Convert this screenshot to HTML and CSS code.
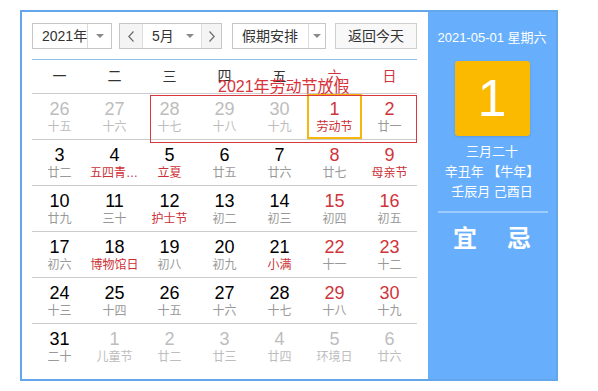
FILE: index.html
```html
<!DOCTYPE html>
<html lang="zh-CN">
<head>
    <meta charset="UTF-8">
    <meta name="viewport" content="width=device-width, initial-scale=1.0">
    <title>万年历</title>
    <link rel="stylesheet" href="styles.css">
</head>
<body>
    <div class="calendar">
        <div class="main">
            <div class="toolbar">
                <div class="select yearSel">
                    <span class="label">2021年</span>
                    <span class="arrow"><i class="tri"></i></span>
                </div>
                <div class="select monthSel">
                    <span class="btn prev"><svg width="6" height="11" viewBox="0 0 6 11"><polyline points="5.5,0.5 0.8,5.5 5.5,10.5" fill="none" stroke="#666" stroke-width="1.1"/></svg></span>
                    <span class="label">5月</span>
                    <span class="marrow"><i class="tri"></i></span>
                    <span class="btn next"><svg width="6" height="11" viewBox="0 0 6 11"><polyline points="0.5,0.5 5.2,5.5 0.5,10.5" fill="none" stroke="#666" stroke-width="1.1"/></svg></span>
                </div>
                <div class="select holidaySel">
                    <span class="label">假期安排</span>
                    <span class="arrow"><i class="tri"></i></span>
                </div>
                <div class="todayBtn">返回今天</div>
            </div>
            <div class="calBody">
                <div class="weekHead">
                    <span>一</span><span>二</span><span>三</span><span>四</span><span>五</span><span class="red">六</span><span class="red">日</span>
                </div>
                <div id="weeks"></div>
                <div class="holidayBox"></div>
                <div class="holidayTitle">2021年劳动节放假</div>
            </div>
        </div>
        <div class="panel">
            <div class="date">2021-05-01 星期六</div>
            <div class="bigDay">1</div>
            <div class="lunarInfo">
                <div>三月二十</div>
                <div>辛丑年 【牛年】</div>
                <div>壬辰月 己酉日</div>
            </div>
            <div class="divider"></div>
            <div class="yiji"><span>宜</span><span>忌</span></div>
        </div>
    </div>

    <script>
        // num, lunar, flags: o = other month, w = weekend, f = festival, s = selected
        var days = [
            [26,"十五","o"],[27,"十六","o"],[28,"十七","o"],[29,"十八","o"],[30,"十九","o"],[1,"劳动节","wfs"],[2,"廿一","w"],
            [3,"廿二",""],[4,"五四青年节","f"],[5,"立夏","f"],[6,"廿五",""],[7,"廿六",""],[8,"廿七","w"],[9,"母亲节","wf"],
            [10,"廿九",""],[11,"三十",""],[12,"护士节","f"],[13,"初二",""],[14,"初三",""],[15,"初四","w"],[16,"初五","w"],
            [17,"初六",""],[18,"博物馆日","f"],[19,"初八",""],[20,"初九",""],[21,"小满","f"],[22,"十一","w"],[23,"十二","w"],
            [24,"十三",""],[25,"十四",""],[26,"十五",""],[27,"十六",""],[28,"十七",""],[29,"十八","w"],[30,"十九","w"],
            [31,"二十",""],[1,"儿童节","o"],[2,"廿二","o"],[3,"廿三","o"],[4,"廿四","o"],[5,"环境日","o"],[6,"廿六","o"]
        ];

        var weeks = document.getElementById("weeks");
        for (var i = 0; i < 6; i++)
        {
            var row = document.createElement("div");
            row.classList.add("week");
            for (var j = 0; j < 7; j++)
            {
                var d = days[i * 7 + j];
                var cell = document.createElement("div");
                cell.classList.add("day");
                if (d[2].indexOf("o") > -1) cell.classList.add("other");
                if (d[2].indexOf("w") > -1) cell.classList.add("weekend");
                if (d[2].indexOf("f") > -1) cell.classList.add("festival");
                if (d[2].indexOf("s") > -1) cell.classList.add("selected");
                var num = document.createElement("div");
                num.classList.add("num");
                num.innerText = d[0];
                var lunar = document.createElement("div");
                lunar.classList.add("lunar");
                lunar.innerText = d[1];
                cell.append(num, lunar);
                row.append(cell);
            }
            weeks.append(row);
        }
    </script>
</body>
</html>
```

FILE: styles.css
```css
body{
    margin: 0;
    background: #fff;
    font-family: "Liberation Sans", "Noto Sans CJK SC", sans-serif;
    color: #000;
}
.calendar{
    display: flex;
    width: 534px;
    margin: 10px 0 0 20px;
    border: 2px solid #64a6ea;
}
.main{
    width: 385px;
    padding: 11px 11px 10px 10px;
}
.toolbar{
    display: flex;
    height: 26px;
    padding-bottom: 10px;
    border-bottom: 1px solid #8fc0ea;
}
.select{
    display: flex;
    box-sizing: border-box;
    height: 26px;
    border: 1px solid #c6c6c6;
    font-size: 14px;
    line-height: 24px;
    color: #333;
    white-space: nowrap;
}
.select .label{
    flex: 1;
    padding-left: 9px;
}
.select .arrow{
    display: flex;
    align-items: center;
    justify-content: center;
    border-left: 1px solid #dcdcdc;
}
.tri{
    width: 0;
    height: 0;
    border-left: 4px solid transparent;
    border-right: 4px solid transparent;
    border-top: 4px solid #8a8a8a;
}
.yearSel{
    width: 80px;
}
.yearSel .arrow{
    width: 23px;
    flex-shrink: 0;
}
.monthSel{
    width: 103px;
    margin-left: 7px;
}
.monthSel .btn{
    width: 22px;
    display: flex;
    align-items: center;
    justify-content: center;
    background: #f4f4f4;
}
.monthSel .prev{
    border-right: 1px solid #dcdcdc;
}
.monthSel .next{
    width: 19px;
    border-left: 1px solid #dcdcdc;
}
.monthSel .marrow{
    width: 22px;
    display: flex;
    align-items: center;
    justify-content: center;
}
.holidaySel{
    width: 94px;
    margin-left: 10px;
}
.holidaySel .arrow{
    width: 16px;
    flex-shrink: 0;
}
.todayBtn{
    box-sizing: border-box;
    width: 82px;
    height: 26px;
    margin-left: 9px;
    border: 1px solid #cfcfcf;
    background: #f8f8f8;
    text-align: center;
    font-size: 14px;
    line-height: 24px;
    color: #333;
}
.calBody{
    position: relative;
}
.weekHead{
    display: grid;
    grid-template-columns: repeat(7, 55px);
    height: 33px;
    line-height: 33px;
    font-size: 14px;
    text-align: center;
    color: #333;
    border-bottom: 1px solid #cccccc;
}
.red{
    color: #d0343b;
}
.week{
    display: grid;
    grid-template-columns: repeat(7, 55px);
    border-bottom: 1px solid #cccccc;
}
.week:last-child{
    border-bottom: none;
}
.day{
    box-sizing: border-box;
    height: 45px;
    padding-top: 5px;
    text-align: center;
}
.num{
    font-size: 18px;
    line-height: 20px;
    color: #000;
}
.lunar{
    margin-top: 1px;
    padding: 0 3px;
    font-size: 12px;
    line-height: 14px;
    color: #999;
    white-space: nowrap;
    overflow: hidden;
    text-overflow: ellipsis;
}
.weekend .num{
    color: #d0343b;
}
.festival .lunar{
    color: #cc3036;
}
.other .num{
    color: #bdbdbd;
}
.other .lunar{
    color: #bdbdbd;
}
.selected{
    border: 2px solid #f5b70f;
    padding-top: 3px;
}
.holidayBox{
    position: absolute;
    top: 35px;
    left: 118px;
    box-sizing: border-box;
    width: 267px;
    height: 48px;
    border: 1px solid #d9383f;
}
.holidayTitle{
    position: absolute;
    top: 18px;
    left: 186px;
    font-size: 16px;
    line-height: 18px;
    color: #d8333b;
    white-space: nowrap;
}
.panel{
    width: 128px;
    background: #67affc;
    color: #fff;
    text-align: center;
}
.date{
    padding-top: 17px;
    font-size: 13px;
    line-height: 18px;
}
.bigDay{
    width: 75px;
    height: 75px;
    margin: 14px auto 0;
    border-radius: 3px;
    background: #fbb900;
    font-size: 52px;
    line-height: 75px;
    box-shadow: 0 1px 3px rgba(0,0,0,0.12);
}
.lunarInfo{
    margin-top: 6px;
    font-size: 13px;
    line-height: 20px;
}
.divider{
    height: 2px;
    margin: 9px 8px 0 10px;
    background: rgba(255,255,255,0.35);
}
.yiji{
    display: flex;
    justify-content: center;
    gap: 30px;
    margin-top: 11px;
    font-size: 24px;
    line-height: 30px;
    font-weight: bold;
}
```
